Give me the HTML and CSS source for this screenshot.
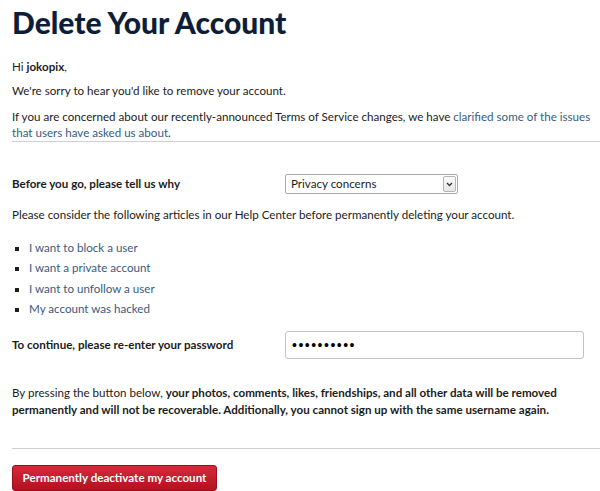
FILE: index.html
```html
<!DOCTYPE html>
<html lang="en">
<head>
    <meta charset="UTF-8">
    <meta name="viewport" content="width=device-width, initial-scale=1.0">
    <title>Delete Your Account</title>
    <link rel="stylesheet" href="styles.css">
</head>
<body>
<div class="page">
    <h1>Delete Your Account</h1>

    <p class="greeting">Hi <strong>jokopix</strong>,</p>
    <p>We're sorry to hear you'd like to remove your account.</p>
    <p class="intro">If you are concerned about our recently-announced Terms of Service changes, we have <a href="#">clarified some of the issues that users have asked us about</a>.</p>

    <hr>

    <form id="delete-form">
        <div class="field-row reason-row">
            <label for="reason">Before you go, please tell us why</label>
            <div class="select-box">
                <span id="reason">Privacy concerns</span>
                <span class="select-arrow">
                    <svg width="7" height="5" viewBox="0 0 7 5"><path d="M1 1 L3.5 3.5 L6 1" fill="none" stroke="#333" stroke-width="1.3"/></svg>
                </span>
            </div>
        </div>

        <p class="help-note">Please consider the following articles in our Help Center before permanently deleting your account.</p>

        <ul class="help-links">
            <li><a href="#">I want to block a user</a></li>
            <li><a href="#">I want a private account</a></li>
            <li><a href="#">I want to unfollow a user</a></li>
            <li><a href="#">My account was hacked</a></li>
        </ul>

        <div class="field-row password-row">
            <label for="password">To continue, please re-enter your password</label>
            <input type="password" id="password" name="password" value="jokopix123">
        </div>

        <p class="warning">By pressing the button below, <strong>your photos, comments, likes, friendships, and all other data will be removed permanently and will not be recoverable. Additionally, you cannot sign up with the same username again.</strong></p>

        <hr class="bottom-rule">

        <button type="submit">Permanently deactivate my account</button>
    </form>
</div>
</body>
</html>
```

FILE: styles.css
```css
html, body {
    margin: 0;
    padding: 0;
    overflow: hidden;
}
body {
    font-family: Lato, "Open Sans", Arial, sans-serif;
    font-size: 11.6px;
    line-height: 16px;
    color: #1c1c1c;
    background: #fff;
}
.page {
    width: 588px;
    padding-left: 12px;
}
h1 {
    margin: 0;
    padding-top: 4px;
    font-size: 30px;
    line-height: 36px;
    font-weight: 900;
    color: #0f1e38;
}
p {
    margin: 0 0 10px;
}
.greeting {
    margin-top: 19px;
    margin-bottom: 8px;
}
a {
    color: #3a5b7e;
    text-decoration: none;
}
strong {
    font-weight: 700;
}
hr {
    margin: 0;
    border: none;
    border-top: 1px solid #cfcfcf;
}
.intro {
    margin-bottom: 0;
}
.field-row {
    display: flex;
    align-items: center;
}
.field-row label {
    width: 273px;
    font-weight: 700;
}
.reason-row {
    margin-top: 32px;
}
.select-box {
    display: flex;
    align-items: center;
    justify-content: space-between;
    width: 166px;
    height: 18px;
    padding-left: 5px;
    border: 1px solid #a9a9a9;
    border-radius: 2px;
}
.select-arrow {
    display: flex;
    align-items: center;
    justify-content: center;
    width: 13px;
    height: 16px;
    margin-right: 1px;
    border: 1px solid #b5b5b5;
    border-radius: 2px;
    background: linear-gradient(#fbfbfb, #e6e6e6);
    box-sizing: border-box;
}
.help-note {
    margin-top: 13px;
}
.help-links {
    list-style: square;
    margin: 17px 0 0;
    padding-left: 17px;
}
.help-links li {
    line-height: 16px;
    margin-bottom: 4.3px;
}
.password-row {
    margin-top: 14px;
}
.password-row input {
    width: 299px;
    height: 28px;
    padding: 0 6px;
    border: 1px solid #c4c4c4;
    border-radius: 3px;
    box-sizing: border-box;
    font-family: Arial, sans-serif;
    font-size: 14px;
    letter-spacing: 1.5px;
    color: #000;
}
.warning {
    margin-top: 25px;
    line-height: 17px;
}
.bottom-rule {
    margin-top: 30px;
}
button {
    margin-top: 16px;
    height: 26px;
    width: 205px;
    padding: 0;
    border: 1px solid #9e0d1b;
    border-radius: 3px;
    background: linear-gradient(#d42a3c, #b3111f);
    color: #fff;
    font-family: Lato, "Open Sans", Arial, sans-serif;
    font-size: 11.6px;
    font-weight: 700;
    cursor: pointer;
}
```
